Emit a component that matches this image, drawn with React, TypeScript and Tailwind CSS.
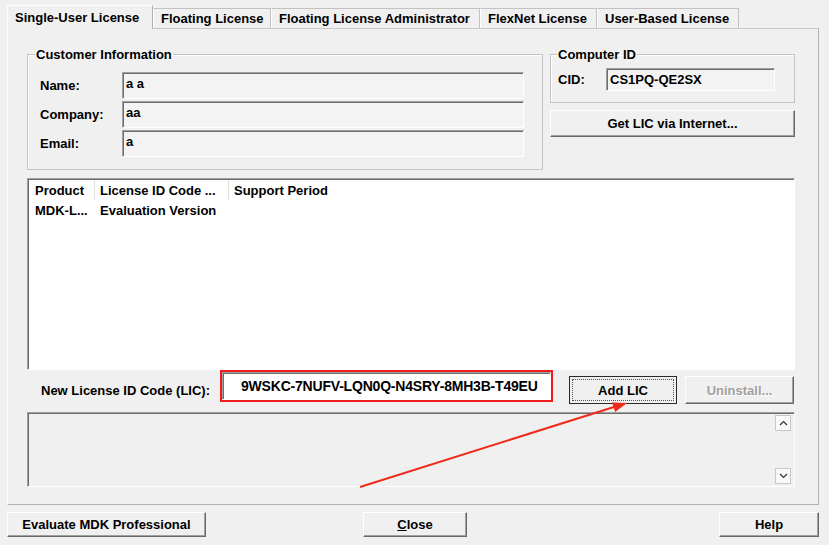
/**
 * License Management dialog
 *
 * Single-User License tab with customer info, computer ID and LIC entry.
 */

const TABS = [
  { label: 'Single-User License', width: 'w-[146px]', active: true },
  { label: 'Floating License', width: 'w-[118px]', active: false },
  { label: 'Floating License Administrator', width: 'w-[209px]', active: false },
  { label: 'FlexNet License', width: 'w-[117px]', active: false },
  { label: 'User-Based License', width: 'w-[142px]', active: false },
];

const CUSTOMER_FIELDS = [
  { label: 'Name:', value: 'a a' },
  { label: 'Company:', value: 'aa' },
  { label: 'Email:', value: 'a' },
];

const raised =
  'border border-t-white border-l-white border-r-[#696969] border-b-[#696969] shadow-[inset_-1px_-1px_0_#a0a0a0]';
const sunken =
  'border border-t-[#a0a0a0] border-l-[#a0a0a0] border-r-white border-b-white shadow-[inset_1px_1px_0_#6d6d6d]';

function Chevron({ up }: { up?: boolean }) {
  return (
    <div className="w-[16px] h-[16px] bg-[#fafafa] border border-[#c8c8c8] flex items-center justify-center">
      <svg width="9" height="6" viewBox="0 0 9 6">
        <path
          d={up ? 'M1 5 L4.5 1.5 L8 5' : 'M1 1 L4.5 4.5 L8 1'}
          fill="none"
          stroke="#333"
          strokeWidth="1.2"
        />
      </svg>
    </div>
  );
}

export default function App() {
  return (
    <div className="relative w-[829px] h-[545px] overflow-hidden bg-[#f0f0f0] font-['Liberation_Sans',Arial,sans-serif] text-[13px] font-bold text-black leading-[15px]">
      {/* Tabs */}
      <div className="flex items-end h-[28px] pl-[7px]">
        {TABS.map((tab) => (
          <div
            key={tab.label}
            className={`${tab.width} shrink-0 flex items-center pl-[7px] bg-[#f0f0f0] border border-b-0 ${
              tab.active
                ? 'relative z-10 h-[24px] -mb-px border-[#b0b0b0] border-t-white border-l-white'
                : 'h-[20px] border-[#c2c2c2] border-l-white'
            }`}
          >
            {tab.label}
          </div>
        ))}
      </div>

      {/* Tab page */}
      <div className="ml-[7px] w-[812px] h-[477px] border border-[#b0b0b0] border-t-[#c8c8c8] border-l-white pl-[19px] pt-[18px]">
        <div className="flex gap-[7px] w-[768px]">
          {/* Customer Information */}
          <fieldset className="w-[516px] border border-[#c3c3c3] shadow-[inset_1px_1px_0_white] pl-[12px] pr-[18px] pb-[12px]">
            <legend className="-ml-[5px] px-[1px] leading-[15px]">Customer Information</legend>
            <div className="flex flex-col gap-[2px] pt-[10px]">
              {CUSTOMER_FIELDS.map((field) => (
                <div key={field.label} className="flex items-center">
                  <span className="w-[82px] shrink-0">{field.label}</span>
                  <div className={`${sunken} flex-1 h-[27px] bg-[#f3f3f3] pl-[3px] pt-[3px]`}>
                    {field.value}
                  </div>
                </div>
              ))}
            </div>
          </fieldset>

          {/* Computer ID */}
          <div className="w-[245px] flex flex-col">
            <fieldset className="border border-[#c3c3c3] shadow-[inset_1px_1px_0_white] pl-[7px] pb-[11px]">
              <legend className="-ml-[1px] px-[1px] leading-[15px]">Computer ID</legend>
              <div className="flex items-center pt-[6px]">
                <span className="w-[48px] shrink-0">CID:</span>
                <div className={`${sunken} w-[169px] h-[23px] bg-[#f3f3f3] pl-[3px] flex items-center`}>
                  CS1PQ-QE2SX
                </div>
              </div>
            </fieldset>
            <button className={`${raised} mt-[7px] h-[27px] bg-[#f0f0f0] font-bold`}>
              Get LIC via Internet...
            </button>
          </div>
        </div>

        {/* License list */}
        <div className={`${sunken} mt-[8px] w-[768px] h-[192px] bg-white pl-[1px] pt-[1px]`}>
          <div className="flex h-[20px] items-center">
            <div className="w-[66px] pl-[6px] border-r border-[#e0e0e0] h-full flex items-center">Product</div>
            <div className="w-[134px] pl-[5px] border-r border-[#e0e0e0] h-full flex items-center">
              License ID Code ...
            </div>
            <div className="pl-[5px]">Support Period</div>
          </div>
          <div className="flex h-[20px] items-center">
            <div className="w-[66px] pl-[6px]">MDK-L...</div>
            <div className="pl-[5px]">Evaluation Version</div>
          </div>
        </div>

        {/* New LIC row */}
        <div className="flex items-start w-[768px] h-[34px]">
          <span className="w-[193px] shrink-0 pl-[14px] mt-[13px]">New License ID Code (LIC):</span>
          <div className="w-[333px] h-[32px] border-2 border-[#ee1c1c]">
            <div className={`${sunken} h-full bg-white pl-[18px] flex items-center text-[14px] tracking-[-0.2px]`}>
              9WSKC-7NUFV-LQN0Q-N4SRY-8MH3B-T49EU
            </div>
          </div>
          <button className="ml-[16px] mt-[6px] w-[108px] h-[28px] border border-[#2a2a2a] bg-[#f0f0f0] p-[2px] font-bold">
            <div className="h-full border border-dotted border-[#555] flex items-center justify-center">
              Add LIC
            </div>
          </button>
          <button
            className={`${raised} ml-[8px] mt-[6px] w-[109px] h-[28px] bg-[#f0f0f0] font-bold text-[#a0a0a0] [text-shadow:1px_1px_0_white]`}
          >
            Uninstall...
          </button>
        </div>

        {/* Status area */}
        <div className={`${sunken} mt-[8px] w-[768px] h-[75px] bg-[#f0f0f0] flex flex-col items-end justify-between pr-[3px] py-[2px]`}>
          <Chevron up />
          <Chevron />
        </div>
      </div>

      {/* Bottom buttons */}
      <div className="flex ml-[7px] w-[812px] mt-[7px]">
        <button className={`${raised} w-[199px] h-[25px] bg-[#f0f0f0] font-bold`}>Evaluate MDK Professional</button>
        <button className={`${raised} ml-[157px] w-[104px] h-[25px] bg-[#f0f0f0] font-bold`}>
          <span className="underline">C</span>lose
        </button>
        <button className={`${raised} ml-auto w-[100px] h-[25px] bg-[#f0f0f0] font-bold`}>Help</button>
      </div>

      {/* Annotation arrow */}
      <svg className="absolute inset-0 pointer-events-none" width="829" height="545">
        <line x1="360" y1="487" x2="614" y2="407" stroke="#f02a1a" strokeWidth="2" />
        <polygon points="627,403 615.1,412 612.1,402.4" fill="#f02a1a" />
      </svg>
    </div>
  );
}
